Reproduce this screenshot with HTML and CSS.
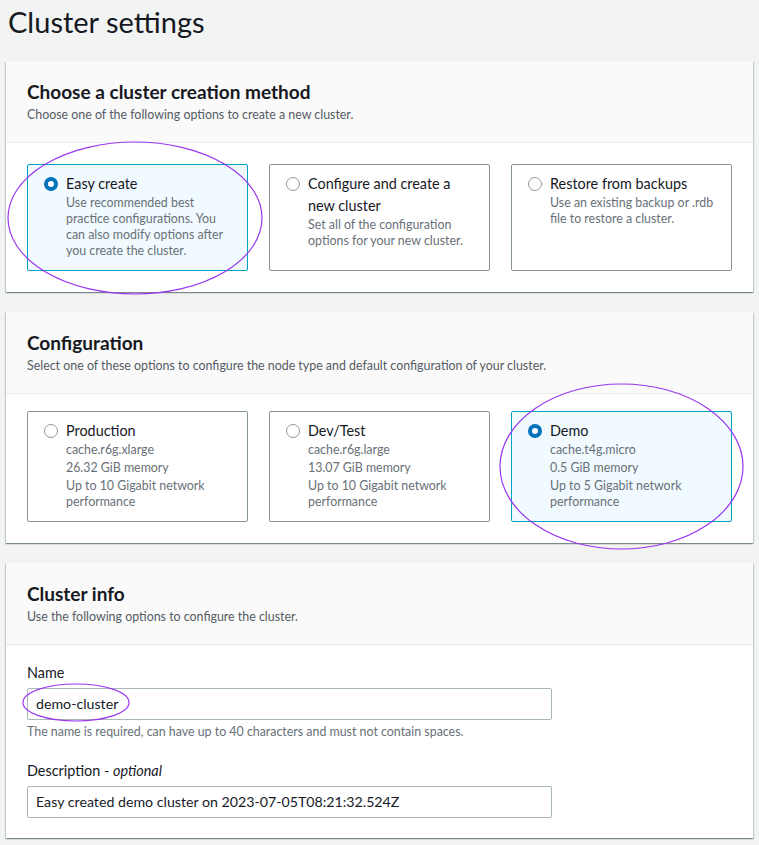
FILE: index.html
```html
<!DOCTYPE html>
<html lang="en">
<head>
<meta charset="utf-8">
<title>Cluster settings</title>
<link rel="stylesheet" href="styles.css">
</head>
<body>
<div class="page">
  <h1 class="page-title">Cluster settings</h1>

  <section class="panel">
    <header class="panel-header">
      <h2 class="panel-title">Choose a cluster creation method</h2>
      <p class="panel-desc">Choose one of the following options to create a new cluster.</p>
    </header>
    <div class="panel-body tiles tiles-first">
      <label class="tile selected">
        <span class="radio on"></span>
        <span class="tile-text">
          <span class="tile-label">Easy create</span>
          <span class="tile-desc">Use recommended best practice configurations. You can also modify options after you create the cluster.</span>
        </span>
      </label>
      <label class="tile">
        <span class="radio"></span>
        <span class="tile-text">
          <span class="tile-label">Configure and create a new cluster</span>
          <span class="tile-desc">Set all of the configuration options for your new cluster.</span>
        </span>
      </label>
      <label class="tile">
        <span class="radio"></span>
        <span class="tile-text">
          <span class="tile-label">Restore from backups</span>
          <span class="tile-desc">Use an existing backup or .rdb file to restore a cluster.</span>
        </span>
      </label>
    </div>
  </section>

  <section class="panel">
    <header class="panel-header">
      <h2 class="panel-title">Configuration</h2>
      <p class="panel-desc">Select one of these options to configure the node type and default configuration of your cluster.</p>
    </header>
    <div class="panel-body tiles">
      <label class="tile">
        <span class="radio"></span>
        <span class="tile-text">
          <span class="tile-label">Production</span>
          <span class="tile-line">cache.r6g.xlarge</span>
          <span class="tile-line">26.32 GiB memory</span>
          <span class="tile-line">Up to 10 Gigabit network performance</span>
        </span>
      </label>
      <label class="tile">
        <span class="radio"></span>
        <span class="tile-text">
          <span class="tile-label">Dev/Test</span>
          <span class="tile-line">cache.r6g.large</span>
          <span class="tile-line">13.07 GiB memory</span>
          <span class="tile-line">Up to 10 Gigabit network performance</span>
        </span>
      </label>
      <label class="tile selected">
        <span class="radio on"></span>
        <span class="tile-text">
          <span class="tile-label">Demo</span>
          <span class="tile-line">cache.t4g.micro</span>
          <span class="tile-line">0.5 GiB memory</span>
          <span class="tile-line">Up to 5 Gigabit network performance</span>
        </span>
      </label>
    </div>
  </section>

  <section class="panel">
    <header class="panel-header">
      <h2 class="panel-title">Cluster info</h2>
      <p class="panel-desc">Use the following options to configure the cluster.</p>
    </header>
    <div class="panel-body form">
      <div class="field">
        <div class="field-label">Name</div>
        <div class="input">demo-cluster</div>
        <div class="field-hint">The name is required, can have up to 40 characters and must not contain spaces.</div>
      </div>
      <div class="field">
        <div class="field-label">Description - <i>optional</i></div>
        <div class="input">Easy created demo cluster on 2023-07-05T08:21:32.524Z</div>
      </div>
    </div>
  </section>

  <svg class="annotations" width="759" height="845" viewBox="0 0 759 845" xmlns="http://www.w3.org/2000/svg">
    <ellipse cx="135" cy="218" rx="127" ry="76"/>
    <ellipse cx="621.5" cy="466.5" rx="121.5" ry="82.5"/>
    <ellipse cx="76" cy="702.5" rx="53" ry="18.5"/>
  </svg>
</div>
</body>
</html>
```

FILE: styles.css
```css
* { box-sizing: border-box; }

html, body {
  margin: 0;
  padding: 0;
  background: #f2f3f3;
}

body {
  font-family: Lato, "Open Sans", "Noto Sans", sans-serif;
  color: #16191f;
  font-size: 14px;
}

.page {
  position: relative;
  width: 759px;
  height: 845px;
  padding: 0 6px;
  overflow: hidden;
}

.page-title {
  margin: 4px 2px 21px;
  font-size: 29px;
  line-height: 36px;
  font-weight: 400;
}

.panel {
  background: #fff;
  width: 747px;
  margin-bottom: 20px;
  box-shadow: 0 1px 1px 0 rgba(0, 28, 36, 0.3), 1px 1px 1px 0 rgba(0, 28, 36, 0.15), -1px 1px 1px 0 rgba(0, 28, 36, 0.15);
}

.panel-header {
  background: #fafafa;
  border-bottom: 1px solid #eaeded;
  padding: 19px 21px 19px;
}

.panel-title {
  margin: 0;
  font-size: 19px;
  line-height: 24px;
  font-weight: 700;
}

.panel-desc {
  margin: 3px 0 0;
  font-size: 12.4px;
  line-height: 16px;
  color: #545b64;
}

.tiles {
  display: grid;
  grid-template-columns: repeat(3, 1fr);
  gap: 21px;
  padding: 17px 21px 21px;
}

.tiles-first {
  padding-top: 21px;
}

.tile {
  display: grid;
  grid-template-columns: 14px 1fr;
  column-gap: 8px;
  align-items: start;
  border: 1px solid #879596;
  border-radius: 2px;
  padding: 8px 16px 11px;
  background: #fff;
}

.tile.selected {
  border-color: #00a1c9;
  background: #f1faff;
}

.radio {
  width: 14px;
  height: 14px;
  margin-top: 4px;
  border-radius: 50%;
  border: 1.5px solid #8d9799;
  background: #fff;
}

.radio.on {
  border: 4px solid #0073bb;
}

.tile-text {
  display: flex;
  flex-direction: column;
}

.tile-label {
  font-size: 14.4px;
  line-height: 22px;
  color: #16191f;
}

.tile-desc {
  font-size: 12.4px;
  line-height: 16px;
  color: #687078;
}

.tile-line {
  font-size: 12.4px;
  line-height: 16px;
  color: #687078;
}

.tile-line + .tile-line {
  margin-top: 2px;
}

.form {
  padding: 17px 21px 20px;
  display: flex;
  flex-direction: column;
  gap: 20px;
}

.field-label {
  font-size: 14.4px;
  line-height: 22px;
}

.input {
  margin-top: 4px;
  width: 525px;
  height: 32px;
  border: 1px solid #aab7b8;
  border-radius: 2px;
  padding: 0 8px;
  font-size: 14.2px;
  line-height: 30px;
  background: #fff;
}

.field-hint {
  margin-top: 4px;
  font-size: 12.4px;
  line-height: 16px;
  color: #687078;
}

.annotations {
  position: absolute;
  top: 0;
  left: 0;
  pointer-events: none;
}

.annotations ellipse {
  fill: none;
  stroke: #9a36f0;
  stroke-width: 1.2;
}
```
